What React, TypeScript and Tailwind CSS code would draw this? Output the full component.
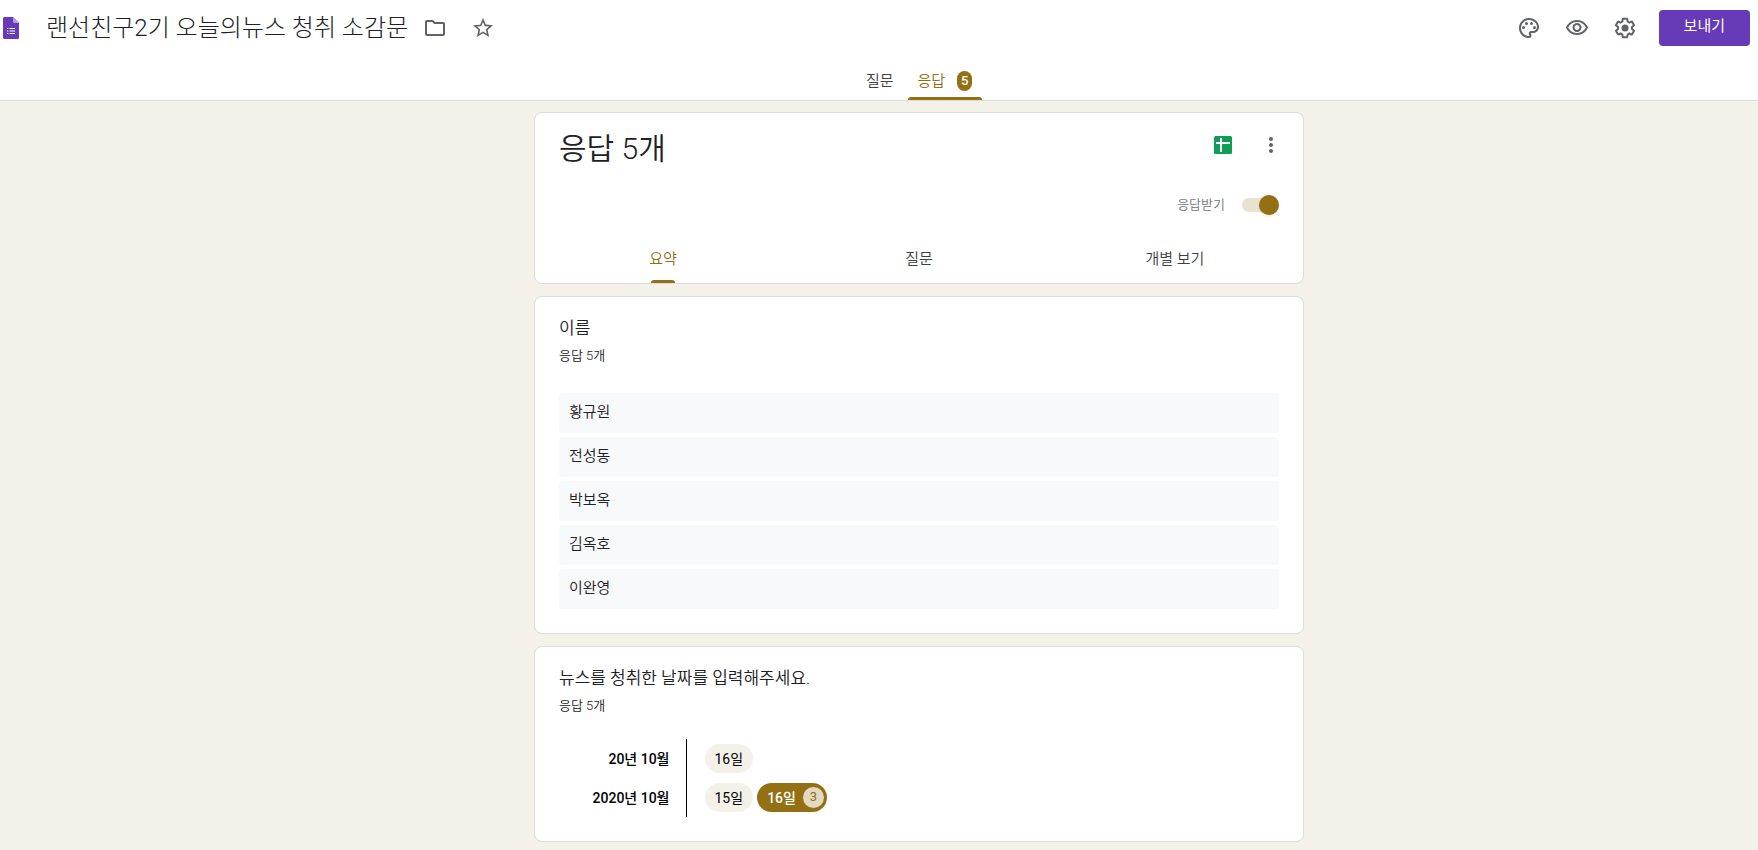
import React, { useState } from 'react';
import {
  MdMoreVert,
  MdOutlineFolder,
  MdOutlinePalette,
  MdOutlineVisibility,
  MdStarBorder,
} from 'react-icons/md';

const names = ['황규원', '전성동', '박보옥', '김옥호', '이완영'];

const months = [
  { label: '20년 10월', days: [{ day: '16일', count: 1 }] },
  { label: '2020년 10월', days: [{ day: '15일', count: 1 }, { day: '16일', count: 3 }] },
];

function FormsLogo() {
  return (
    <svg width="16" height="22" viewBox="0 0 16 22" aria-hidden="true">
      <path d="M1.5 0H10l6 6v14.5a1.5 1.5 0 0 1-1.5 1.5h-13A1.5 1.5 0 0 1 0 20.5v-19A1.5 1.5 0 0 1 1.5 0z" fill="#673ab7" />
      <path d="M10 0l6 6h-4.5A1.5 1.5 0 0 1 10 4.5z" fill="#b39ddb" />
      <path d="M6.5 11H12v1H6.5zM6.5 13.5H12v1H6.5zM6.5 16H12v1H6.5zM4 11h1.3v1H4zM4 13.5h1.3v1H4zM4 16h1.3v1H4z" fill="#fff" />
    </svg>
  );
}

function GearIcon() {
  return (
    <svg width="24" height="24" viewBox="0 0 24 24" fill="currentColor" aria-hidden="true">
      <path d="M13.850 22.250h-3.700c-.740 0-1.360-.540-1.450-1.270l-.270-1.890c-.270-.140-.530-.290-.790-.460l-1.800.720c-.700.260-1.470-.030-1.810-.650L2.200 15.530c-.350-.660-.200-1.440.360-1.880l1.530-1.190c-.010-.150-.020-.300-.020-.460 0-.150.010-.310.020-.460l-1.520-1.190c-.590-.450-.740-1.260-.370-1.880l1.850-3.190c.340-.620 1.110-.900 1.790-.630l1.810.730c.260-.170.520-.320.780-.460l.270-1.910c.090-.700.710-1.250 1.440-1.250h3.700c.740 0 1.360.540 1.450 1.270l.270 1.890c.270.140.530.290.790.460l1.800-.720c.710-.260 1.480.030 1.820.650l1.840 3.180c.360.660.200 1.440-.360 1.880l-1.520 1.190c.010.150.020.300.020.460s-.010.310-.020.460l1.520 1.190c.560.450.720 1.230.370 1.860l-1.860 3.220c-.340.620-1.110.900-1.800.630l-1.800-.720c-.260.170-.520.320-.780.460l-.270 1.910c-.100.680-.720 1.220-1.460 1.220zm-3.230-2h2.760l.370-2.550.530-.220c.440-.180.880-.440 1.340-.780l.450-.340 2.380.960 1.380-2.400-2.030-1.580.070-.560c.030-.260.060-.510.060-.780s-.030-.530-.060-.780l-.070-.560 2.030-1.580-1.390-2.400-2.390.960-.450-.350c-.420-.320-.870-.580-1.330-.770l-.520-.220-.370-2.550h-2.760l-.370 2.550-.530.210c-.440.190-.880.440-1.340.790l-.450.330-2.380-.950-1.390 2.390 2.030 1.580-.070.560a7 7 0 0 0-.060.790c0 .260.020.530.060.780l.070.560-2.030 1.580 1.380 2.400 2.390-.960.450.350c.430.330.860.580 1.330.770l.530.220.380 2.550z" />
      <circle cx="12" cy="12" r="3.5" />
    </svg>
  );
}

function SheetsIcon() {
  return (
    <svg width="18" height="18" viewBox="0 0 18 18" aria-hidden="true">
      <rect width="18" height="18" rx="1.5" fill="#0f9d58" />
      <path d="M6 2h2v4h8v2H8v8H6V8H2V6h4z" fill="#fff" />
    </svg>
  );
}

function IconButton({ label, children }: { label: string; children: React.ReactNode }) {
  return (
    <button type="button" aria-label={label} className="flex size-12 items-center justify-center text-[#5f6368]">
      {children}
    </button>
  );
}

function Header() {
  return (
    <header className="border-b border-[#dadce0] bg-white">
      <div className="flex h-14 items-center pl-[3px] pr-2">
        <FormsLogo />
        <h1 className="ml-[27px] mr-[3px] text-2xl font-light text-[#202124]">랜선친구2기 오늘의뉴스 청취 소감문</h1>
        <IconButton label="폴더로 이동"><MdOutlineFolder size={24} /></IconButton>
        <IconButton label="별표"><MdStarBorder size={24} /></IconButton>
        <div className="ml-auto flex items-center">
          <IconButton label="테마 맞춤설정"><MdOutlinePalette size={24} /></IconButton>
          <IconButton label="미리보기"><MdOutlineVisibility size={24} /></IconButton>
          <IconButton label="설정"><GearIcon /></IconButton>
          <button type="button" className="ml-2.5 h-9 rounded bg-[#673ab7] px-[25px] pb-1 text-[15px] font-normal text-white">
            보내기
          </button>
        </div>
      </div>
      <nav className="flex h-11 items-stretch justify-center gap-1 pl-20 text-[15px]">
        <button type="button" className="flex items-center px-2.5 pb-1.5 pt-3 text-[#3c4043]">질문</button>
        <button type="button" className="relative flex items-center gap-3 px-2.5 pb-1.5 pt-3 text-[#937014]">
          응답
          <span className="flex h-5 w-[15px] items-center justify-center rounded-lg bg-[#937014] text-[13px] font-medium text-white">5</span>
          <span className="absolute inset-x-0 bottom-0 h-[3px] rounded-t bg-[#937014]" />
        </button>
      </nav>
    </header>
  );
}

function Card({ children }: { children: React.ReactNode }) {
  return <section className="w-full max-w-[770px] rounded-lg border border-[#dadce0] bg-white">{children}</section>;
}

function QuestionTitle({ title }: { title: string }) {
  return (
    <>
      <h3 className="text-[17px] leading-6 text-[#202124]">{title}</h3>
      <p className="mt-2 text-[13px] leading-4 text-[#202124]">응답 5개</p>
    </>
  );
}

function SummaryCard() {
  const [accepting, setAccepting] = useState(true);
  const [tab, setTab] = useState('요약');

  return (
    <Card>
      <div className="flex justify-between px-6 pt-2">
        <h2 className="pt-2 text-[30px] leading-10 text-[#202124]">응답 5개</h2>
        <div className="-mr-4 flex">
          <IconButton label="스프레드시트에서 보기"><SheetsIcon /></IconButton>
          <IconButton label="더보기"><MdMoreVert size={24} /></IconButton>
        </div>
      </div>
      <div className="flex justify-end px-6 pt-[26px]">
        <label className="flex h-5 cursor-pointer items-center gap-[17px] text-[13px] text-[#70757a]">
          응답받기
          <span className="relative flex h-5 w-[37px] items-center">
            <input
              type="checkbox"
              role="switch"
              checked={accepting}
              onChange={(e) => setAccepting(e.target.checked)}
              className="peer h-3.5 w-full appearance-none rounded-full bg-[#e9e2d0]"
            />
            <span className="absolute left-0 size-5 rounded-full bg-white shadow peer-checked:left-auto peer-checked:right-0 peer-checked:bg-[#937014]" />
          </span>
        </label>
      </div>
      <div className="mt-5 grid grid-cols-3 text-[15px]">
        {['요약', '질문', '개별 보기'].map((t) => (
          <button
            key={t}
            type="button"
            onClick={() => setTab(t)}
            className={`relative h-12 ${tab === t ? 'text-[#937014]' : 'text-[#3c4043]'}`}
          >
            {t}
            {tab === t && <span className="absolute bottom-0 left-1/2 -ml-3 h-[3px] w-6 rounded-t bg-[#937014]" />}
          </button>
        ))}
      </div>
    </Card>
  );
}

export default function App() {
  return (
    <div className='min-h-screen bg-[#f4f1e8] font-["Roboto","Noto_Sans_CJK_KR",sans-serif] font-[350]'>
      <Header />
      <main className="flex flex-col items-center gap-3 pb-2 pl-20 pt-[11px]">
        <SummaryCard />
        <Card>
          <div className="px-6 pb-6 pt-[19px]">
            <QuestionTitle title="이름" />
            <ul className="mt-[29px] flex flex-col gap-1">
              {names.map((name) => (
                <li key={name} className="h-10 rounded bg-[#f8f9fa] px-2.5 pt-[7px] text-[15px] leading-6 text-[#202124]">
                  {name}
                </li>
              ))}
            </ul>
          </div>
        </Card>
        <Card>
          <div className="px-6 pb-6 pt-[19px]">
            <QuestionTitle title="뉴스를 청취한 날짜를 입력해주세요." />
            <table className="mt-[25px] text-sm text-black">
              <tbody>
                {months.map((month) => (
                  <tr key={month.label} className="h-[39px]">
                    <th scope="row" className="w-[127px] border-r border-black pr-4 text-right font-medium">
                      {month.label}
                    </th>
                    <td className="pl-[18px]">
                      <div className="flex gap-1">
                        {month.days.map(({ day, count }) =>
                          count > 1 ? (
                            <span key={day} className="flex h-[29px] items-center gap-[7px] rounded-full bg-[#937014] pl-2.5 pr-[3px] font-medium text-white">
                              {day}
                              <span className="flex size-[21px] items-center justify-center rounded-full bg-[#e2d9c0] text-[13px] font-normal text-[#937014]">
                                {count}
                              </span>
                            </span>
                          ) : (
                            <span key={day} className="flex h-[29px] items-center rounded-full bg-[#f4f1e8] px-2.5 font-normal">{day}</span>
                          ),
                        )}
                      </div>
                    </td>
                  </tr>
                ))}
              </tbody>
            </table>
          </div>
        </Card>
      </main>
    </div>
  );
}
